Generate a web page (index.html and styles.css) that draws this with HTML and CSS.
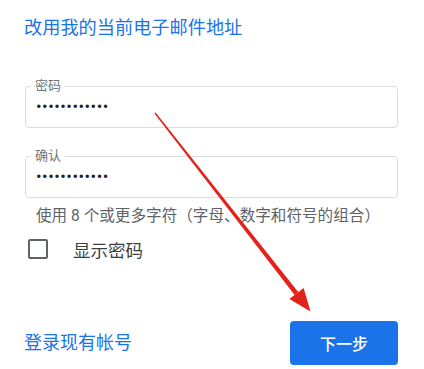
FILE: index.html
```html
<!DOCTYPE html>
<html lang="zh-CN">
<head>
  <meta charset="UTF-8">
  <meta name="viewport" content="width=device-width, initial-scale=1.0">
  <title>创建密码</title>
  <link rel="stylesheet" href="styles.css">
</head>
<body>
  <div id="pagina">
    <a class="enlace titulo" href="#">改用我的当前电子邮件地址</a>

    <fieldset class="campo campo-primero">
      <legend>密码</legend>
      <input type="password" value="contrasena12" readonly>
    </fieldset>

    <fieldset class="campo campo-segundo">
      <legend>确认</legend>
      <input type="password" value="contrasena12" readonly>
    </fieldset>

    <p class="ayuda">使用 8 个或更多字符（字母、数字和符号的组合）</p>

    <label class="mostrar">
      <span class="caja"></span>
      <span>显示密码</span>
    </label>

    <div class="acciones">
      <a class="enlace" href="#">登录现有帐号</a>
      <button class="siguiente">下一步</button>
    </div>
  </div>

  <!-- flecha roja de anotación encima de la página -->
  <svg class="flecha" width="424" height="369" viewBox="0 0 424 369">
    <polygon points="154.4,113.4 155.6,112.6 298.4,292.2 294.6,295.0" fill="#e3221b"/>
    <polygon points="310.5,311.5 289.4,299.1 303.6,288.1" fill="#e3221b"/>
  </svg>
</body>
</html>
```

FILE: styles.css
```css
body {
  margin: 0;
  background: #fff;
  font-family: Roboto, "Noto Sans CJK SC", sans-serif;
  position: relative;
}
#pagina {
  display: flex;
  flex-direction: column;
  padding: 16px 26px 0 24px;
}
.enlace {
  color: #1a73e8;
  text-decoration: none;
  font-size: 18px;
  line-height: 24px;
}
.titulo {
  font-size: 18.2px;
  align-self: flex-start;
}
.campo {
  margin: 0 0 0 1px;
  padding: 0 10px 8px 10px;
  border: 1px solid #dadce0;
  border-radius: 4px;
}
.campo-primero {
  margin-top: 39px;
}
.campo-segundo {
  margin-top: 21px;
}
.campo legend {
  margin-left: -5px;
  padding: 0 4px;
  font-size: 13px;
  line-height: 14px;
  color: #70757a;
}
.campo input {
  display: block;
  width: 100%;
  height: 26px;
  padding: 0;
  border: none;
  outline: none;
  background: none;
  font-family: Roboto, sans-serif;
  font-size: 16.5px;
  letter-spacing: 0.5px;
  color: #202124;
}
.ayuda {
  margin: 8px 0 0 12px;
  font-size: 15.6px;
  line-height: 20px;
  color: #5f6368;
}
.mostrar {
  display: flex;
  align-items: center;
  gap: 25px;
  margin-top: 11px;
  padding-left: 4px;
  height: 24px;
  font-size: 17.5px;
  color: #3c4043;
}
.caja {
  width: 16px;
  height: 16px;
  border: 2px solid #5f6368;
  border-radius: 2px;
}
.acciones {
  display: flex;
  justify-content: space-between;
  align-items: center;
  margin-top: 60px;
}
.siguiente {
  width: 108px;
  height: 44px;
  border: none;
  border-radius: 4px;
  background: #1a73e8;
  color: #fff;
  font-family: Roboto, "Noto Sans CJK SC", sans-serif;
  font-size: 16px;
  font-weight: 500;
}
.flecha {
  position: absolute;
  left: 0;
  top: 0;
  pointer-events: none;
}
```
